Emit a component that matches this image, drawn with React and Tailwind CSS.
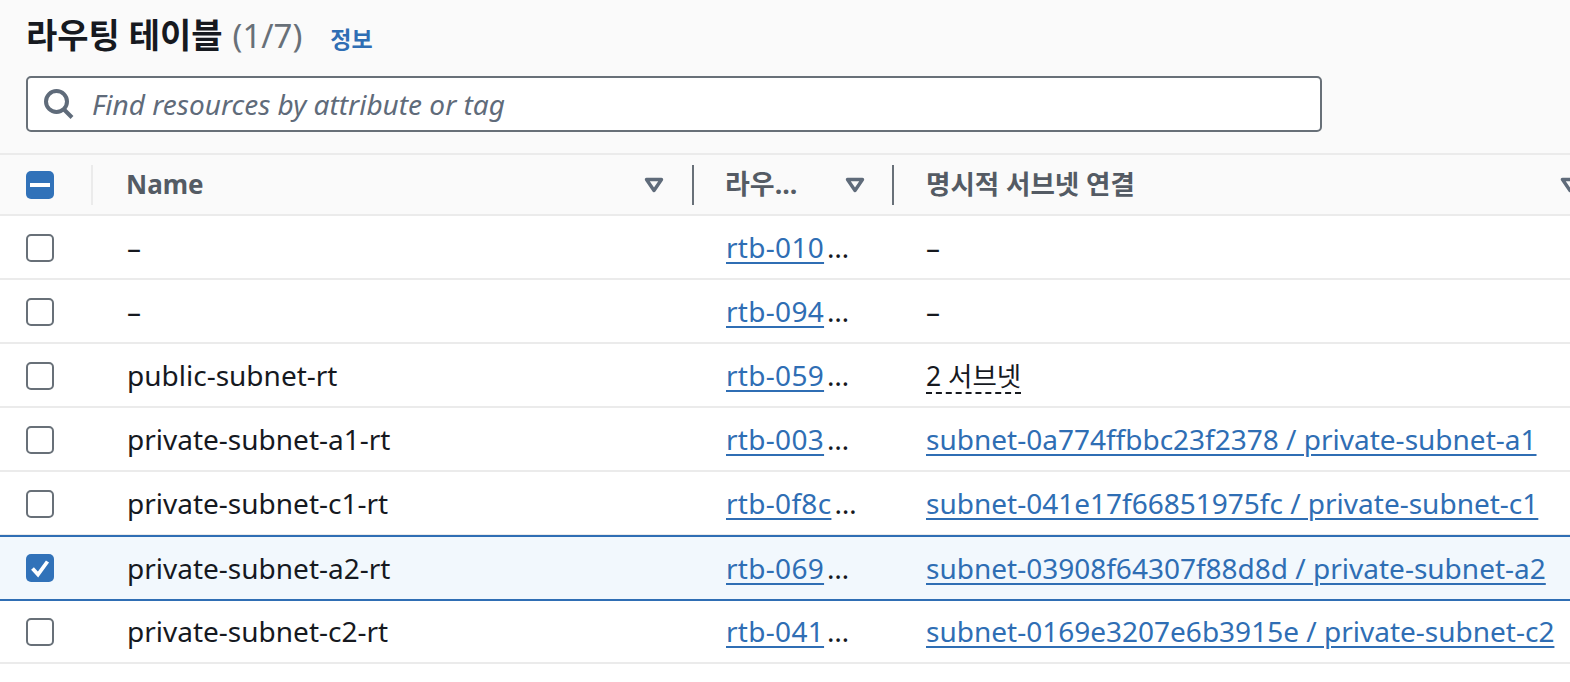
const fontStack = '[font-family:"Noto_Sans","Noto_Sans_CJK_KR",sans-serif]';

const rows = [
  { name: '–', id: 'rtb-010', subnet: '–' },
  { name: '–', id: 'rtb-094', subnet: '–' },
  { name: 'public-subnet-rt', id: 'rtb-059', subnet: '2 서브넷', dashed: true },
  { name: 'private-subnet-a1-rt', id: 'rtb-003', subnet: 'subnet-0a774ffbbc23f2378 / private-subnet-a1', link: true },
  { name: 'private-subnet-c1-rt', id: 'rtb-0f8c', subnet: 'subnet-041e17f66851975fc / private-subnet-c1', link: true },
  { name: 'private-subnet-a2-rt', id: 'rtb-069', subnet: 'subnet-03908f64307f88d8d / private-subnet-a2', link: true, selected: true },
  { name: 'private-subnet-c2-rt', id: 'rtb-041', subnet: 'subnet-0169e3207e6b3915e / private-subnet-c2', link: true },
];

function Caret() {
  return (
    <svg width="20" height="16" viewBox="0 0 20 16" className="shrink-0">
      <path d="M2.5 2.5h15L10 13.5z" fill="none" stroke="#5f6b7a" strokeWidth="3.4" strokeLinejoin="round" />
    </svg>
  );
}

function SearchIcon() {
  return (
    <svg width="32" height="32" viewBox="0 0 32 32" className="shrink-0">
      <circle cx="13.5" cy="13.5" r="10.5" fill="none" stroke="#5f6b7a" strokeWidth="4" />
      <path d="M20.5 21l8.5 8.5" fill="none" stroke="#5f6b7a" strokeWidth="4" />
    </svg>
  );
}

function Checkbox({ state }) {
  if (state === 'none') {
    return <div className="w-[28px] h-[28px] rounded-[5px] border-2 border-[#687078] bg-white" />;
  }
  return (
    <div className="w-[28px] h-[28px] rounded-[5px] bg-[#3172b9] flex items-center justify-center">
      {state === 'mixed' ? (
        <div className="w-[20px] h-[4px] bg-white" />
      ) : (
        <svg width="22" height="22" viewBox="0 0 22 22">
          <path d="M3.5 11.5l5.5 6L18.5 4.5" fill="none" stroke="#fff" strokeWidth="3.8" />
        </svg>
      )}
    </div>
  );
}

function Row({ row }) {
  const borders = row.selected
    ? 'h-[66px] -my-px border-y-2 border-[#2f6eb4] bg-[#f2f8fd] relative'
    : 'h-[64px] border-b-2 border-[#ebebeb]';
  return (
    <div className={`flex items-center text-[28px] text-[#16191f] ${borders}`}>
      <div className={`w-[93px] pl-[26px] shrink-0 ${row.selected ? '' : 'pt-[2px]'}`}>
        <Checkbox state={row.selected ? 'checked' : 'none'} />
      </div>
      <div className="w-[600px] pl-[34px] shrink-0 leading-[40px]">{row.name}</div>
      <div className="w-[200px] pl-[33px] shrink-0 whitespace-nowrap leading-[40px]">
        <span className="text-[#2f6eb4] tracking-[0.3px] underline decoration-2 underline-offset-[4px]">{row.id}</span>
        <span className="ml-[3px] tracking-[1px]">…</span>
      </div>
      <div className="flex-1 pl-[33px] whitespace-nowrap leading-[40px]">
        {row.link && (
          <span className="text-[#2f6eb4] underline decoration-2 underline-offset-[4px]">{row.subnet}</span>
        )}
        {row.dashed && (
          <span className="inline-block text-[26.5px] leading-[32px] border-b-2 border-dashed border-[#16191f]">{row.subnet}</span>
        )}
        {!row.link && !row.dashed && row.subnet}
      </div>
    </div>
  );
}

export default function App() {
  return (
    <div className={`h-[682px] w-[1570px] overflow-hidden bg-white ${fontStack}`}>
      <div className="h-[153px] bg-[#fafafa] px-[26px] pt-[12px]">
        <div className="flex items-baseline h-[46px]">
          <h1 className="text-[34px] leading-[46px] font-bold text-[#16191f]">라우팅 테이블</h1>
          <span className="ml-[10px] text-[33px] leading-[46px] text-[#687078]">(1/7)</span>
          <span className="ml-[28px] text-[23px] font-bold text-[#2f6eb4]">정보</span>
        </div>
        <div className="mt-[18px] w-[1296px] h-[56px] rounded-[5px] border-2 border-[#687078] bg-white flex items-center pl-[15px]">
          <SearchIcon />
          <span className="ml-[17px] text-[28px] italic text-[#5f6b7a]">Find resources by attribute or tag</span>
        </div>
      </div>
      <div className="h-[63px] bg-[#fafafa] border-y-2 border-[#ebebeb] flex items-center text-[27px] font-bold text-[#545b64]">
        <div className="w-[93px] h-[40px] pl-[26px] shrink-0 border-r-2 border-[#ebebeb] flex items-center">
          <Checkbox state="mixed" />
        </div>
        <div className="w-[601px] h-[40px] pl-[33px] pr-[28px] shrink-0 border-r-2 border-[#687078] flex items-center justify-between">
          <span className="text-[26px]">Name</span>
          <Caret />
        </div>
        <div className="w-[200px] h-[40px] pl-[31px] pr-[27px] shrink-0 border-r-2 border-[#687078] flex items-center justify-between">
          <span>라우...</span>
          <Caret />
        </div>
        <div className="flex-1 h-[40px] pl-[32px] flex items-center justify-between overflow-hidden">
          <span className="text-[26.5px]">명시적 서브넷 연결</span>
          <div className="-mr-[10px]">
            <Caret />
          </div>
        </div>
      </div>
      {rows.map((row) => (
        <Row key={row.id} row={row} />
      ))}
    </div>
  );
}
